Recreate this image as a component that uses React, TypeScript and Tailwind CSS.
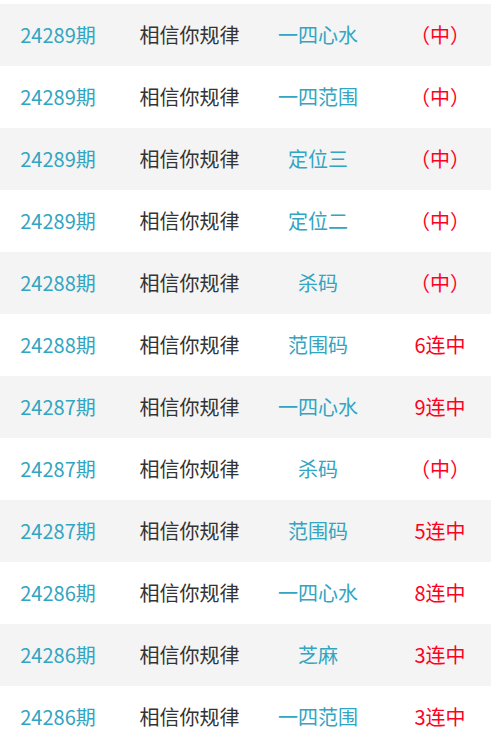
const rows = [
  { issue: "24289期", name: "相信你规律", kind: "一四心水", result: "（中）" },
  { issue: "24289期", name: "相信你规律", kind: "一四范围", result: "（中）" },
  { issue: "24289期", name: "相信你规律", kind: "定位三", result: "（中）" },
  { issue: "24289期", name: "相信你规律", kind: "定位二", result: "（中）" },
  { issue: "24288期", name: "相信你规律", kind: "杀码", result: "（中）" },
  { issue: "24288期", name: "相信你规律", kind: "范围码", result: "6连中" },
  { issue: "24287期", name: "相信你规律", kind: "一四心水", result: "9连中" },
  { issue: "24287期", name: "相信你规律", kind: "杀码", result: "（中）" },
  { issue: "24287期", name: "相信你规律", kind: "范围码", result: "5连中" },
  { issue: "24286期", name: "相信你规律", kind: "一四心水", result: "8连中" },
  { issue: "24286期", name: "相信你规律", kind: "芝麻", result: "3连中" },
  { issue: "24286期", name: "相信你规律", kind: "一四范围", result: "3连中" },
];

export default function App() {
  return (
    <div
      className="w-full bg-white pt-1 text-[20px] leading-none"
      style={{ fontFamily: '"Noto Sans CJK SC", "Noto Sans", sans-serif' }}
    >
      {rows.map((r, i) => (
        <div
          key={i}
          className={`grid h-[62px] grid-cols-[116px_147px_110px_1fr] items-center text-center ${
            i % 2 === 0 ? "bg-[#f4f4f4]" : "bg-white"
          }`}
        >
          <span className="text-[#31a5c2]">{r.issue}</span>
          <span className="text-[#333333]">{r.name}</span>
          <span className="text-[#31a5c2]">{r.kind}</span>
          <span className="pl-4 text-[#ff0022]">{r.result}</span>
        </div>
      ))}
    </div>
  );
}
